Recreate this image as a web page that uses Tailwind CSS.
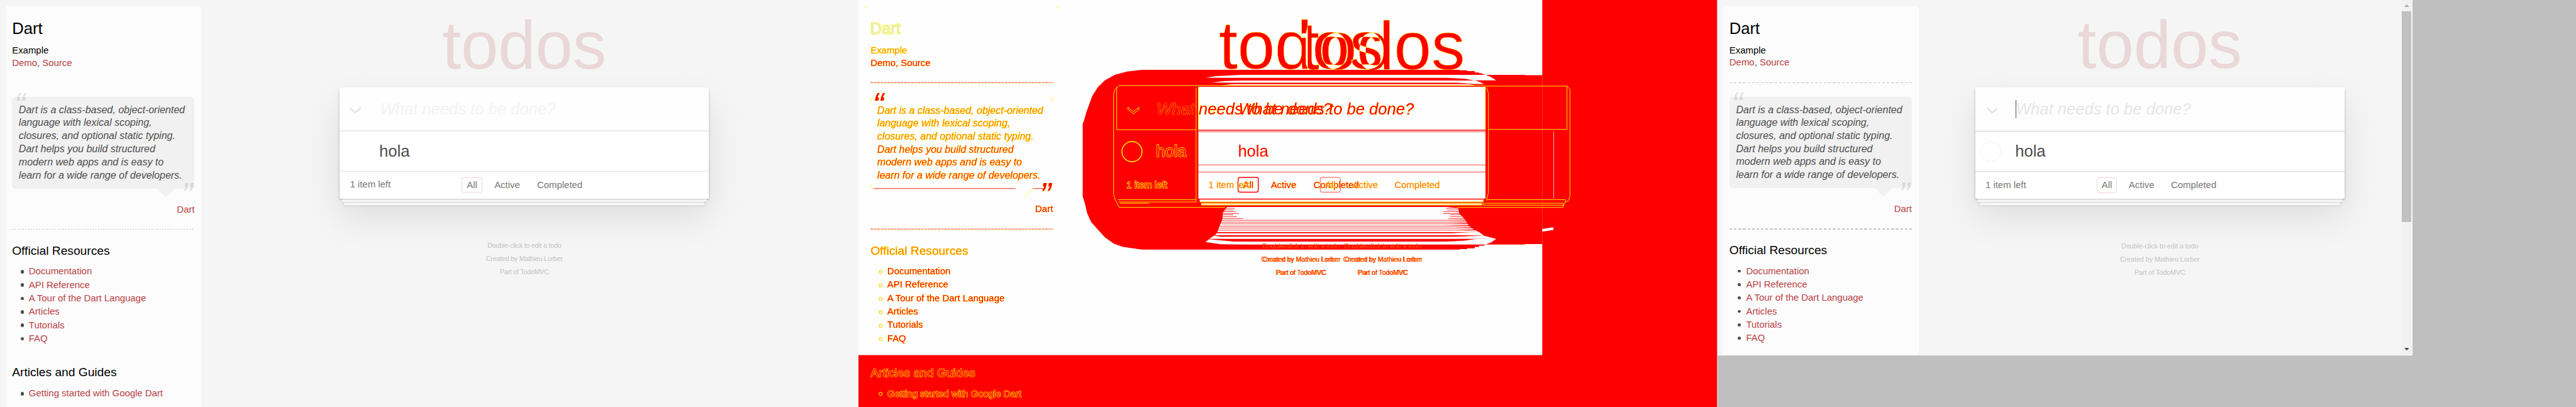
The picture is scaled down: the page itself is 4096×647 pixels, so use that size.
<!DOCTYPE html>
<html lang="en">
<head>
<meta charset="utf-8">
<title>TodoMVC Dart comparison</title>
<script src="https://cdn.jsdelivr.net/npm/@tailwindcss/browser@4"></script>
</head>
<body class="overflow-hidden bg-[#bfbfbf]">
<div class="flex w-[5760px] h-[910px] overflow-hidden [zoom:0.7111111] font-['Liberation_Sans',Arial,sans-serif] text-[21px] text-[#4d4d4d]">

  <!-- Baseline page -->
  <div class="flex w-[1920px] h-[910px] shrink-0 overflow-hidden bg-[#f5f5f5] pl-[12px]">
    <aside class="mt-[12px] h-[920px] w-[438px] shrink-0 rounded-[7px] bg-[#fcfcfc] px-[15px] pt-[31.5px] z-10">
      <h3 class="h-[40px] text-[36px] leading-[40px] text-black">Dart</h3>
      <h5 class="mt-[15px] h-[28px] leading-[28px] text-black">Example</h5>
      <p class="h-[28px] leading-[28px]"><a class="text-[#b83f45]">Demo</a>, <a class="text-[#b83f45]">Source</a></p>
      <div class="mt-[30.5px] h-[1px] bg-[repeating-linear-gradient(90deg,#c5c5c5_0_3px,transparent_3px_6px)]"></div>
      <blockquote class="relative mt-[31px] h-[205px] rounded-[7px] bg-[#f1f1f1] pl-[15px] pt-[14.6px] text-[22.5px] leading-[29.25px] italic whitespace-nowrap">
        <span class="absolute left-[4.5px] top-[-20.5px] text-[75px] leading-[75px] opacity-15">“</span>
        Dart is a class-based, object-oriented<br>language with lexical scoping,<br>closures, and optional static typing.<br>Dart helps you build structured<br>modern web apps and is easy to<br>learn for a wide range of developers.
        <span class="absolute right-[4.5px] top-[181.5px] text-[75px] leading-[75px] opacity-15">”</span>
        <svg class="absolute left-[324.7px] top-[205px] w-[39px] h-[19px] fill-[#f1f1f1]" viewBox="0 0 39 19"><path d="M0 0H39L19.5 19Z"/></svg>
      </blockquote>
      <p class="mt-[31.7px] h-[28px] text-right leading-[28px] text-[#b83f45]">Dart</p>
      <div class="mt-[30.3px] h-[1px] bg-[repeating-linear-gradient(90deg,#c5c5c5_0_3px,transparent_3px_6px)]"></div>
      <h4 class="mt-[32.3px] h-[30px] text-[27px] leading-[30px] text-black">Official Resources</h4>
      <ul class="mt-[16.1px] list-none leading-[30px] text-[#b83f45]">
        <li class="flex items-center pl-[19px]"><i class="mr-[10.5px] mt-[2px] size-[8px] rounded-full bg-[#4d4d4d]"></i>Documentation</li>
        <li class="flex items-center pl-[19px]"><i class="mr-[10.5px] mt-[2px] size-[8px] rounded-full bg-[#4d4d4d]"></i>API Reference</li>
        <li class="flex items-center pl-[19px]"><i class="mr-[10.5px] mt-[2px] size-[8px] rounded-full bg-[#4d4d4d]"></i>A Tour of the Dart Language</li>
        <li class="flex items-center pl-[19px]"><i class="mr-[10.5px] mt-[2px] size-[8px] rounded-full bg-[#4d4d4d]"></i>Articles</li>
        <li class="flex items-center pl-[19px]"><i class="mr-[10.5px] mt-[2px] size-[8px] rounded-full bg-[#4d4d4d]"></i>Tutorials</li>
        <li class="flex items-center pl-[19px]"><i class="mr-[10.5px] mt-[2px] size-[8px] rounded-full bg-[#4d4d4d]"></i>FAQ</li>
      </ul>
      <h4 class="mt-[45.9px] h-[30px] text-[27px] leading-[30px] text-black">Articles and Guides</h4>
      <ul class="mt-[17px] list-none leading-[30px] text-[#b83f45]">
        <li class="flex items-center pl-[19px]"><i class="mr-[10.5px] mt-[2px] size-[8px] rounded-full bg-[#4d4d4d]"></i>Getting started with Google Dart</li>
      </ul>
    </aside>
    <main class="ml-[310px] w-[825px] shrink-0">
      <h1 class="h-[195px] pt-[27px] text-center text-[150px] leading-[150px] text-[#ead7d7]">todos</h1>
      <section class="relative h-[249px] bg-white shadow-[0_3px_6px_rgba(0,0,0,0.2),0_37.5px_75px_rgba(0,0,0,0.1)]">
        <div class="absolute inset-x-0 bottom-0 h-[75px] shadow-[0_1.5px_1.5px_rgba(0,0,0,0.2),0_12px_0_-4.5px_#f6f6f6,0_13.5px_1.5px_-4.5px_rgba(0,0,0,0.2),0_24px_0_-9px_#f6f6f6,0_25.5px_3px_-9px_rgba(0,0,0,0.2)]"></div>
        <div class="flex h-[98px] items-center bg-[#fefefe] pl-[22.5px] shadow-[inset_0_-3px_1.5px_rgba(0,0,0,0.03)]">
          <svg class="mt-[5px] h-[15px] w-[25px] shrink-0 fill-[#e6e6e6]" viewBox="0 0 25 15"><path d="M0 0L12.5 9.5L25 0V5L12.5 15L0 5Z"/></svg>
          <span class="ml-[42.5px] -mt-[1px] text-[36px] leading-[54px] italic text-[#f3f3f3]">What needs to be done?</span>
        </div>
        <div class="h-[1px] bg-[#e6e6e6]"></div>
        <div class="h-[89px] pl-[88px] pt-[17px] text-[36px] leading-[54px]">hola</div>
        <div class="h-[1px] bg-[#e2e2e2]"></div>
        <div class="flex h-[60px] items-center pb-[2px] pl-[22.5px] leading-[29px] text-[#777]">
          <span class="w-[250px]">1 item left</span>
          <div class="flex gap-[15.5px]">
            <span class="rounded-[4.5px] border border-[#efd5d5] px-[10px] h-[33.5px] leading-[31.5px]">All</span>
            <span class="border border-transparent px-[10px] h-[33.5px] leading-[31.5px]">Active</span>
            <span class="border border-transparent px-[10px] h-[33.5px] leading-[31.5px]">Completed</span>
          </div>
        </div>
      </section>
      <footer class="relative mt-[90.5px] text-center text-[15px] leading-[29.8px] tracking-[-0.28px] text-[#bfbfbf] [text-shadow:0_1px_0_rgba(255,255,255,0.5)]">
        <p>Double-click to edit a todo</p><p>Created by Mathieu Lorber</p><p>Part of TodoMVC</p>
      </footer>
    </main>
  </div>

  <!-- Difference map -->
  <div class="relative isolate w-[1920px] h-[910px] shrink-0 overflow-hidden bg-[#fefefe]">
    <svg class="block w-[1920px] h-[910px]" viewBox="1920 0 1920 910">
      <g class="text-[150px]" text-anchor="middle">
        <text class="fill-[#00fefe] mix-blend-difference" x="2909.5" y="153">todos</text>
        <text class="fill-[#00fefe] mix-blend-difference" x="3092.5" y="154">todos</text>
        <text class="fill-none stroke-[#ff0] stroke-[0.6]" x="2909.5" y="153">todos</text>
        <text class="fill-none stroke-[#ff0] stroke-[0.6]" x="3092.5" y="154">todos</text>
      </g>
      <!-- changed areas -->
      <g class="fill-[#f00]">
        <path d="M3449 0H3840V910H1920V794H3449Z"/>
        <path d="M2554 156H3265V157H3281V159H3298V162H3308V164H3315V166H3320V167.3H3410V168H3449V545.7H3410V546.7H3320V549H3308V552H3298V555H3281V557H3265V558H2554L2511.6 552L2491.5 545L2471 530.6L2456 514L2440 496L2431 475.5L2427 457L2421.4 439V277L2424.5 269L2429.5 251L2436 233L2443 214L2456 194L2471 179.6L2493.8 167L2520.5 160Z"/>
      </g>
      <g class="fill-[#fefefe]">
        <path d="M2775 167.3H3323L3334 172L3346 179.7H3295L3286 178L3276 176L3257 175L3235 174H2740L2696 173.5L2720 170Z"/>
        <path d="M2778 180H3299L3309 183L3319 187.7H3295L3275 186L3255 185H2765L2709 184.5L2740 181Z"/>
        <path d="M2758 188H3285L3300 191H2728Z"/>
        <path d="M2680 194H3322V290H2680Z M2680 292H3322V294H2680Z M2680 295H3322V368H2680Z M2680 369H3322V384H2680Z M2680 385H3322V444H2680Z"/>
        <path d="M2683 446H3317.5V451H2683Z M2687 455H3314V458H2687Z"/>
        <path d="M3449 512L3474 508V514L3449 518Z M3474 294H3475V444H3474Z"/>
        <path class="fill-[#fcfcfc]" d="M2744 462.5H3236L3261 465L3263 477L3269 483L3278 493L3285 505L3298 514L3309 519.5L3319 527L3346 534L3336 541L3323 546.7H2775L2730 546L2696 541L2709 530.6L2719 524.5L2724.5 514L2728 504L2734 490L2735 475Z"/>
      </g>
      <g class="fill-[#f00]">
        <path d="M2735 465H2761V466H2735Z M2735 469H2759V470H2735Z M2735 473H2764V474H2735Z M2735 477H2771V478H2735Z M2735 480H2758V481H2735Z M2735 484H2766V485H2735Z M2735 488H2780V489H2735Z"/>
        <path d="M3234 465H3262V466H3234Z M3236 469H3262V470H3236Z M3227 473H3262V474H3227Z M3227 477H3263V478H3227Z M3243 480H3269V481H3243Z M3243 484H3269V485H3243Z M3239 488H3274V489H3239Z"/>
        <path d="M2734 492H3240L3280 491V493H2734Z M2732 496H3235L3282 495.5V497H2732Z M2731 500H3246L3284 499V501H2731Z M2728 505H3228L3287 503.5V505.5L3228 506H2728Z M2728 509H3251L3293 508V510H2728Z M2724 514H3260L3300 512.5V515H2724Z M2721 519H3275L3311 518L3245 521.5H2721Z M2712 526H3278L3319 526.6L3255 529H2730Z M2695 534H3346L3300 534.5L3275 538L3235 540H2760Z"/>
      </g>
      <!-- edge pixels -->
      <g class="fill-none stroke-[#ff0] stroke-[1.3]">
        <path d="M2497.5 194V290H2675 M2503 191.3H3318 M2503 191.3L2493 200L2490.5 212V435L2494 446L2503 463.5H2740 M3258 463.7H3495L3500 452L3508 448L3511 437V200L3505 192.5H3318"/>
        <path d="M2675 196V451 M2680 194V290 M3321.7 194V290 M3324 196L3328.7 208V430L3324 449 M3504.3 193V289.3H3330"/>
        <path d="M2500 446.5H2675 M2502 451.5H2675 M2505 454.5H2570 M2683 451.5H3317V446 M2687 454.5H3314V458.5H2687Z M3325 446.3H3500.7V451.5 M3317 454.3H3495.7V458.7H3317Z"/>
        <path d="M2522.5 240L2534.6 249.5L2547 240V245L2534.6 254.5L2522.5 245Z M2704.5 239L2716.5 248.5L2729 239V244L2716.5 253.5L2704.5 244Z"/>
      </g>
      <circle class="fill-none stroke-[#ff0] stroke-[2]" cx="2531.6" cy="339" r="22.5"/>
      <g class="fill-none stroke-[#f00]">
        <rect class="stroke-[2]" x="2769" y="396.5" width="45" height="33" rx="4"/>
        <rect class="stroke-[1]" x="2952.5" y="396.5" width="45" height="33" rx="4"/>
      </g>
      <g class="fill-[#f00] stroke-[#ff0] stroke-[0.9] [paint-order:stroke]">
        <g class="text-[36px]">
          <text class="italic" x="2587" y="255.5">What needs to be done?</text>
          <text class="italic" x="2770" y="256.5">What needs to be done?</text>
          <text class="stroke-[2]" x="2585.5" y="350.2">hola</text>
          <text class="stroke-[0.3]" x="2768.5" y="350.2">hola</text>
        </g>
        <g class="text-[21px]">
          <text class="stroke-[1.8]" x="2519.5" y="420.5">1 item left</text>
          <text x="2780" y="420.5">All</text><text x="2842" y="420.5">Active</text><text x="2937.5" y="420.5">Completed</text>
          <g class="fill-[#ff7030] stroke-[0.7]"><text x="2702.5" y="420.5">1 item left</text>
          <text x="2963.7" y="420.5">All</text><text x="3024.5" y="420.5">Active</text><text x="3118.5" y="420.5">Completed</text></g>
        </g>
        <g class="text-[15px] [paint-order:normal] stroke-[0.2]" text-anchor="middle">
          <text x="2909.5" y="555.5">Double-click to edit a todo</text>
          <text x="2909.5" y="585.3">Created by Mathieu Lorber</text><text x="2909.5" y="584.3" class="tracking-[-0.28px]">Created by Mathieu Lorber</text>
          <text x="2909.5" y="615">Part of TodoMVC</text><text x="2909.5" y="614" class="tracking-[-0.28px]">Part of TodoMVC</text>
          <text x="3092.5" y="555.5">Double-click to edit a todo</text>
          <text x="3092.5" y="585.3">Created by Mathieu Lorber</text><text x="3092.5" y="584.3" class="tracking-[-0.28px]">Created by Mathieu Lorber</text>
          <text x="3092.5" y="615">Part of TodoMVC</text><text x="3092.5" y="614" class="tracking-[-0.28px]">Part of TodoMVC</text>
        </g>
        <!-- sidebar texts -->
        <text class="text-[36px] fill-[#e8e8d8] stroke-[1.8]" x="1946" y="76">Dart</text>
        <g class="text-[21px]">
          <text class="fill-[#ff9000]" x="1947" y="120">Example</text>
          <text x="1947" y="147.5">Demo, Source</text>
          <text x="2315.3" y="474.5">Dart</text>
          <text x="1984.5" y="613.3">Documentation</text>
          <text x="1984.5" y="643.3">API Reference</text>
          <text x="1984.5" y="673.3">A Tour of the Dart Language</text>
          <text x="1984.5" y="703.3">Articles</text>
          <text x="1984.5" y="733.3">Tutorials</text>
          <text x="1984.5" y="763.3">FAQ</text>
          <text class="stroke-[1.6]" x="1984.5" y="886.7">Getting started with Google Dart</text>
        </g>
        <g class="text-[27px]">
          <text class="fill-[#ff8000]" x="1947" y="569.3">Official Resources</text>
          <text class="stroke-[1.6]" x="1947" y="841.7">Articles and Guides</text>
        </g>
        <g class="text-[22.5px] italic">
          <g class="fill-[#ff8000]"><text x="1962" y="254">Dart is a class-based, object-oriented</text>
          <text x="1962" y="283">language with lexical scoping,</text>
          <text x="1962" y="312">closures, and optional static typing.</text></g>
          <g class="fill-[#ff3000]"><text x="1962" y="341.5">Dart helps you build structured</text>
          <text x="1962" y="370.5">modern web apps and is easy to</text>
          <text x="1962" y="399.5">learn for a wide range of developers.</text></g>
        </g>
        <g class="text-[75px] italic"><text x="1951.5" y="260">“</text><text x="2325.5" y="461">”</text></g>
      </g>
      <g class="fill-none stroke-[#f00] stroke-[1.2]">
        <path d="M1954 421.5H2271 M2310 421.5H2334"/>
        <path stroke-dasharray="6 2 5 2" d="M1947 184.5H2355 M1947 512H2355"/>
        <path class="stroke-[#ff0]" stroke-dasharray="4 6" d="M1950 186H2355 M1950 513.5H2355"/>
        <path class="stroke-[#ff0]" d="M2290.5 441L2309 422 M1947.5 413V416L1950 420L1953 421.5 M1947.5 226V221L1952 217.5 M2348 217.5L2354 221V226 M1932 20L1938 13 M2363 13L2369 20"/>
      </g>
      <g class="fill-none stroke-[#ffd000] stroke-[1.6]">
        <circle cx="1969.5" cy="608" r="3.5"/><circle cx="1969.5" cy="638" r="3.5"/><circle cx="1969.5" cy="668" r="3.5"/><circle cx="1969.5" cy="698" r="3.5"/><circle cx="1969.5" cy="728" r="3.5"/><circle cx="1969.5" cy="758" r="3.5"/><circle cx="1969.5" cy="880.5" r="3.5"/>
      </g>
    </svg>
  </div>

  <!-- Current page -->
  <div class="w-[1920px] h-[910px] shrink-0 bg-[#bfbfbf]">
    <div class="flex w-[1555px] h-[795px] overflow-hidden border-r border-b border-white bg-[#f5f5f5] pl-[12px]">
      <aside class="mt-[12px] h-[920px] w-[438px] shrink-0 rounded-[7px] bg-[#fcfcfc] px-[15px] pt-[31.5px] z-10">
        <h3 class="h-[40px] text-[36px] leading-[40px] text-black">Dart</h3>
        <h5 class="mt-[15px] h-[27px] leading-[28px] text-black">Example</h5>
        <p class="h-[28px] leading-[28px]"><a class="text-[#b83f45]">Demo</a>, <a class="text-[#b83f45]">Source</a></p>
        <div class="mt-[30.5px] h-[2px] bg-[repeating-linear-gradient(90deg,#c5c5c5_0_6px,transparent_6px_10.05px)]"></div>
        <blockquote class="relative mt-[31px] h-[204px] rounded-[7px] bg-[#f1f1f1] pl-[15px] pt-[14.6px] text-[22.5px] leading-[29.05px] italic whitespace-nowrap">
          <span class="absolute left-[4.5px] top-[-21.5px] text-[75px] leading-[75px] opacity-15">“</span>
          Dart is a class-based, object-oriented<br>language with lexical scoping,<br>closures, and optional static typing.<br>Dart helps you build structured<br>modern web apps and is easy to<br>learn for a wide range of developers.
          <span class="absolute right-[4.5px] top-[179.5px] text-[75px] leading-[75px] opacity-15">”</span>
          <svg class="absolute left-[324.7px] top-[204px] w-[39px] h-[20px] fill-[#f1f1f1]" viewBox="0 0 39 20"><path d="M0 0H39L19.5 20Z"/></svg>
        </blockquote>
        <p class="mt-[31.7px] h-[28px] text-right leading-[28px] text-[#b83f45]">Dart</p>
        <div class="mt-[30.3px] h-[2px] bg-[repeating-linear-gradient(90deg,#c5c5c5_0_6px,transparent_6px_10.05px)]"></div>
        <h4 class="mt-[31.3px] h-[30px] text-[27px] leading-[30px] text-black">Official Resources</h4>
        <ul class="mt-[16.1px] list-none leading-[30px] text-[#b83f45]">
          <li class="flex items-center pl-[19px]"><i class="mr-[12px] mt-[2px] size-[6.5px] rounded-full bg-[#4d4d4d]"></i>Documentation</li>
          <li class="flex items-center pl-[19px]"><i class="mr-[12px] mt-[2px] size-[6.5px] rounded-full bg-[#4d4d4d]"></i>API Reference</li>
          <li class="flex items-center pl-[19px]"><i class="mr-[12px] mt-[2px] size-[6.5px] rounded-full bg-[#4d4d4d]"></i>A Tour of the Dart Language</li>
          <li class="flex items-center pl-[19px]"><i class="mr-[12px] mt-[2px] size-[6.5px] rounded-full bg-[#4d4d4d]"></i>Articles</li>
          <li class="flex items-center pl-[19px]"><i class="mr-[12px] mt-[2px] size-[6.5px] rounded-full bg-[#4d4d4d]"></i>Tutorials</li>
          <li class="flex items-center pl-[19px]"><i class="mr-[12px] mt-[2px] size-[6.5px] rounded-full bg-[#4d4d4d]"></i>FAQ</li>
        </ul>
      </aside>
      <main class="ml-[127px] w-[825px] shrink-0">
        <h1 class="h-[195px] pt-[26px] text-center text-[150px] leading-[150px] text-[#ead7d7]">todos</h1>
        <section class="relative h-[249px] bg-white shadow-[0_3px_6px_rgba(0,0,0,0.2),0_37.5px_75px_rgba(0,0,0,0.1)]">
          <div class="absolute inset-x-0 bottom-0 h-[75px] shadow-[0_1.5px_1.5px_rgba(0,0,0,0.2),0_12px_0_-4.5px_#f6f6f6,0_13.5px_1.5px_-4.5px_rgba(0,0,0,0.2),0_24px_0_-9px_#f6f6f6,0_25.5px_3px_-9px_rgba(0,0,0,0.2)]"></div>
          <div class="flex h-[98px] items-center bg-[#fefefe] pl-[25px] shadow-[inset_0_-3px_1.5px_rgba(0,0,0,0.03)]">
            <svg class="mt-[6px] h-[15px] w-[25px] shrink-0 fill-[#e6e6e6]" viewBox="0 0 25 15"><path d="M0 0L12.5 9.5L25 0V5L12.5 15L0 5Z"/></svg>
            <i class="ml-[40px] -mt-[1px] h-[41px] w-[2px] bg-[#4d4d4d]"></i>
            <span class="-ml-[2px] -mt-[2px] text-[36px] leading-[54px] italic text-[#e6e6e6]">What needs to be done?</span>
          </div>
          <div class="h-[2px] bg-[#e6e6e6]"></div>
          <div class="relative flex h-[88px] bg-white pl-[11.5px] pt-[16px] text-[36px] leading-[54px]">
            <svg class="mt-[5px] size-[46px] shrink-0 fill-none stroke-[#ededed] stroke-[1.4]" viewBox="0 0 46 46"><circle cx="23" cy="23" r="22.2"/></svg>
            <span class="ml-[31.5px]">hola</span>
          </div>
          <div class="h-[2px] bg-[#e6e6e6]"></div>
          <div class="flex h-[59px] items-center pb-[1px] pl-[22.5px] leading-[29px] text-[#777]">
            <span class="w-[248.5px]">1 item left</span>
            <div class="flex gap-[14.5px]">
              <span class="rounded-[4.5px] border-2 border-[#efd5d5] px-[10px] h-[35px] leading-[31px]">All</span>
              <span class="border-2 border-transparent px-[10px] h-[35px] leading-[31px]">Active</span>
              <span class="border-2 border-transparent px-[10px] h-[35px] leading-[31px]">Completed</span>
            </div>
          </div>
        </section>
        <footer class="relative mt-[91.5px] text-center text-[15px] leading-[29.8px] text-[#bfbfbf] [text-shadow:0_1px_0_rgba(255,255,255,0.5)]">
          <p>Double-click to edit a todo</p><p>Created by Mathieu Lorber</p><p>Part of TodoMVC</p>
        </footer>
      </main>
      <div class="ml-auto flex h-[794px] w-[25px] shrink-0 flex-col items-center bg-[#f1f1f1]">
        <svg class="mt-[10px] h-[6px] w-[11px] shrink-0 fill-[#a3a3a3]" viewBox="0 0 11 6"><path d="M0 6L5.5 0L11 6Z"/></svg>
        <div class="mt-[9px] h-[471px] w-[21px] shrink-0 bg-[#c1c1c1]"></div>
        <svg class="mt-[282px] h-[6px] w-[11px] shrink-0 fill-[#505050]" viewBox="0 0 11 6"><path d="M0 0H11L5.5 6Z"/></svg>
      </div>
    </div>
  </div>
</div>
</body>
</html>
